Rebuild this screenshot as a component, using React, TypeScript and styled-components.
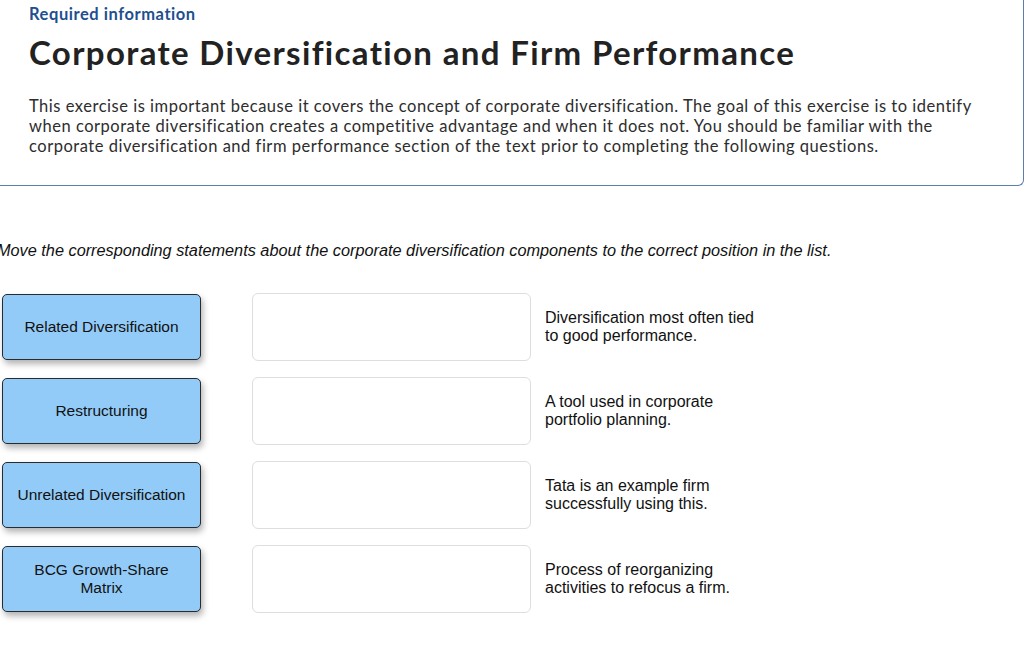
import styled, { createGlobalStyle } from "styled-components";

const GlobalStyle = createGlobalStyle`
  html, body {
    margin: 0;
    padding: 0;
    background: #fff;
    overflow: hidden;
  }
  * {
    box-sizing: border-box;
  }
`;

const matches = [
  {
    label: "Related Diversification",
    statement: "Diversification most often tied to good performance.",
  },
  {
    label: "Restructuring",
    statement: "A tool used in corporate portfolio planning.",
  },
  {
    label: "Unrelated Diversification",
    statement: "Tata is an example firm successfully using this.",
  },
  {
    label: "BCG Growth-Share Matrix",
    statement: "Process of reorganizing activities to refocus a firm.",
  },
];

export default function App() {
  return (
    <Page>
      <GlobalStyle />
      <InfoPanel>
        <Eyebrow>Required information</Eyebrow>
        <Title>Corporate Diversification and Firm Performance</Title>
        <Intro>
          This exercise is important because it covers the concept of corporate
          diversification. The goal of this exercise is to identify when
          corporate diversification creates a competitive advantage and when it
          does not. You should be familiar with the corporate diversification
          and firm performance section of the text prior to completing the
          following questions.
        </Intro>
      </InfoPanel>
      <Instruction>
        Move the corresponding statements about the corporate diversification
        components to the correct position in the list.
      </Instruction>
      <MatchGrid>
        {matches.map((m) => (
          <MatchRow key={m.label}>
            <Chip>{m.label}</Chip>
            <DropSlot />
            <Statement>{m.statement}</Statement>
          </MatchRow>
        ))}
      </MatchGrid>
    </Page>
  );
}

const Page = styled.div`
  width: 1024px;
  height: 646px;
  overflow: hidden;
  background: #fff;
`;

const InfoPanel = styled.section`
  width: 1024px;
  padding: 4px 40px 29px 29px;
  border-right: 1.5px solid #5b7db0;
  border-bottom: 1.5px solid #5b7db0;
  border-bottom-right-radius: 6px;
  font-family: Lato, "Open Sans", sans-serif;
`;

const Eyebrow = styled.p`
  margin: 0;
  font-size: 16.5px;
  line-height: 20px;
  font-weight: 700;
  letter-spacing: 0.55px;
  color: #1e4f8f;
`;

const Title = styled.h1`
  margin: 8px 0 0;
  font-size: 33px;
  line-height: 40px;
  font-weight: 700;
  letter-spacing: 1.35px;
  color: #222;
`;

const Intro = styled.p`
  margin: 24px 0 0;
  max-width: 960px;
  font-size: 16.5px;
  line-height: 20px;
  letter-spacing: 0.52px;
  color: #2d2d2d;
`;

const Instruction = styled.p`
  margin: 55px 0 0 -3px;
  white-space: nowrap;
  font-family: "Liberation Sans", Arial, sans-serif;
  font-style: italic;
  font-size: 16.3px;
  line-height: 18px;
  color: #111;
`;

const MatchGrid = styled.div`
  display: grid;
  row-gap: 16px;
  margin-top: 34px;
  padding-left: 2px;
`;

const MatchRow = styled.div`
  display: grid;
  grid-template-columns: 199px 330px auto;
  align-items: center;
  height: 68px;
`;

const Chip = styled.div`
  display: flex;
  align-items: center;
  justify-content: center;
  height: 66px;
  padding: 0 12px;
  text-align: center;
  background: #93cbf8;
  border: 1px solid #2b2b2b;
  border-radius: 5px;
  box-shadow: 2px 4px 6px rgba(0, 0, 0, 0.3);
  font-family: "Liberation Sans", Arial, sans-serif;
  font-size: 15.5px;
  line-height: 18px;
  color: #111;
`;

const DropSlot = styled.div`
  height: 68px;
  margin-left: 51px;
  width: 279px;
  border: 1px solid #dedede;
  border-radius: 6px;
  background: #fff;
`;

const Statement = styled.p`
  margin: 0 0 0 14px;
  max-width: 222px;
  font-family: "Liberation Sans", Arial, sans-serif;
  font-size: 16px;
  line-height: 18px;
  color: #111;
`;
